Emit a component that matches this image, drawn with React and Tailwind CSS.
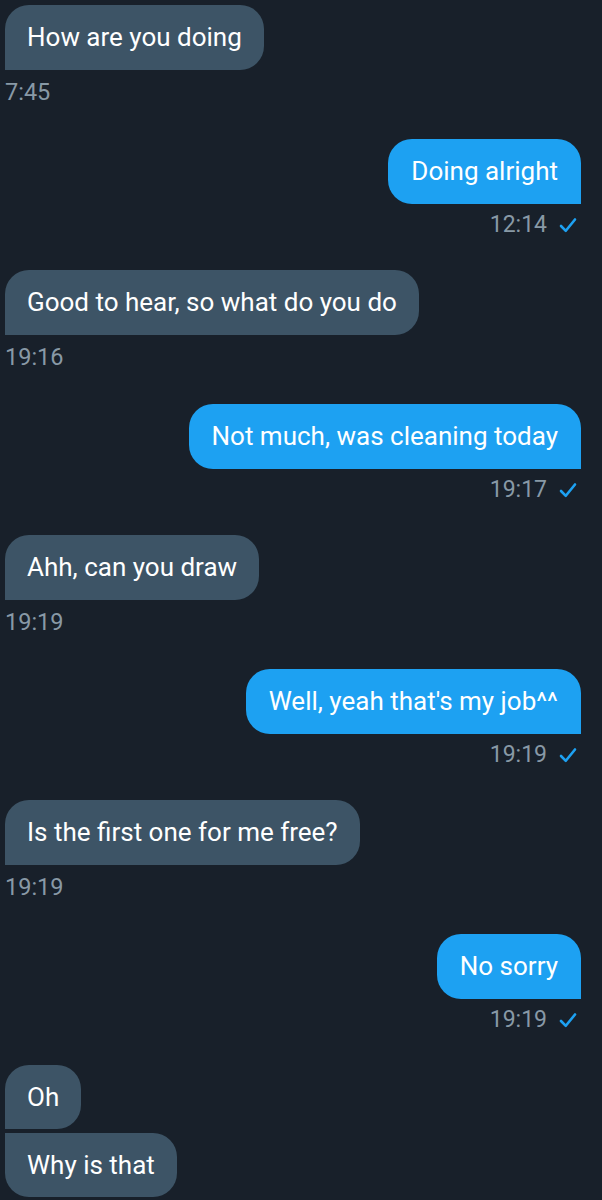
const messages = [
  { id: 1, text: "How are you doing", time: "7:45", mine: false },
  { id: 2, text: "Doing alright", time: "12:14", mine: true },
  { id: 3, text: "Good to hear, so what do you do", time: "19:16", mine: false },
  { id: 4, text: "Not much, was cleaning today", time: "19:17", mine: true },
  { id: 5, text: "Ahh, can you draw", time: "19:19", mine: false },
  { id: 6, text: "Well, yeah that's my job^^", time: "19:19", mine: true },
  { id: 7, text: "Is the first one for me free?", time: "19:19", mine: false },
  { id: 8, text: "No sorry", time: "19:19", mine: true },
];

function Check() {
  return (
    <svg width="18" height="18" viewBox="0 0 18 18" className="ml-[12px]">
      <path d="M2 10 L6.8 14.8 L16 3.5" fill="none" stroke="#1da1f2" strokeWidth="2.6" strokeLinecap="round" strokeLinejoin="round" />
    </svg>
  );
}

function Received({ msg }) {
  return (
    <div className="flex flex-col items-start mb-[33px]">
      <div className="h-[65px] flex items-center px-[22px] bg-[#3d5466] text-white text-[26px] rounded-[24px] rounded-bl-none">
        {msg.text}
      </div>
      <div className="mt-[8px] h-[28px] leading-[28px] text-[23.5px] text-[#8899a6]">{msg.time}</div>
    </div>
  );
}

function Sent({ msg }) {
  return (
    <div className="flex flex-col items-end mb-[31px]">
      <div className="h-[65px] flex items-center px-[23px] bg-[#1da1f2] text-white text-[26px] rounded-[24px] rounded-br-none">
        {msg.text}
      </div>
      <div className="mt-[7px] h-[28px] flex items-center text-[23px] text-[#8899a6] pr-[4px]">
        {msg.time}
        <Check />
      </div>
    </div>
  );
}

export default function App() {
  return (
    <div className="min-h-screen bg-[#18202a] pl-[5px] pr-[21px] pt-[5px] font-['Roboto',sans-serif]">
      {messages.map((m) => (m.mine ? <Sent key={m.id} msg={m} /> : <Received key={m.id} msg={m} />))}
      <div className="flex flex-col items-start gap-[4px]">
        <div className="h-[64px] flex items-center px-[22px] bg-[#3d5466] text-white text-[26px] rounded-[24px] rounded-bl-none">
          Oh
        </div>
        <div className="h-[64px] flex items-center px-[22px] bg-[#3d5466] text-white text-[26px] rounded-[24px] rounded-tl-none">
          Why is that
        </div>
      </div>
    </div>
  );
}
